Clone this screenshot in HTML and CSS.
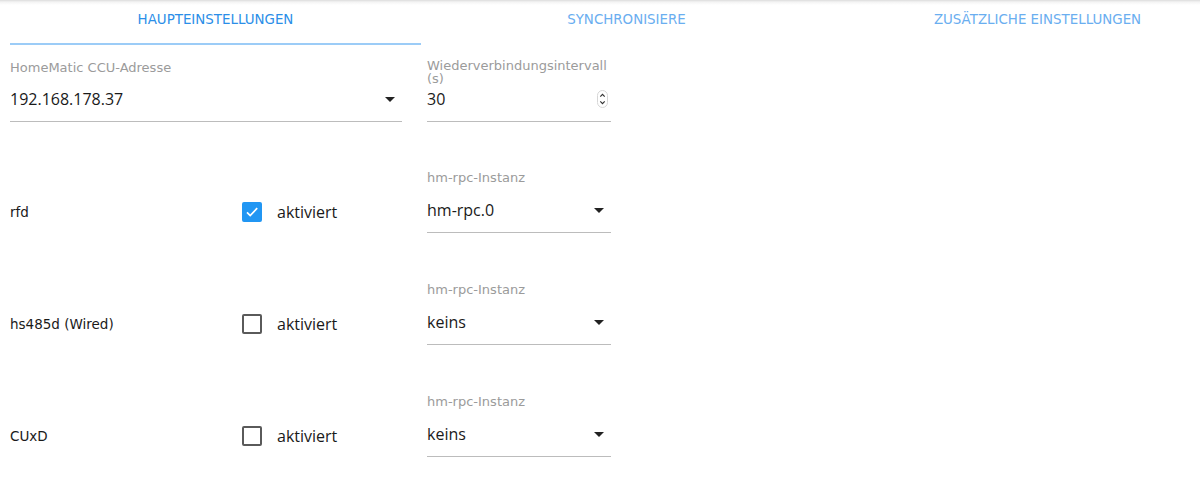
FILE: index.html
```html
<!DOCTYPE html>
<html lang="de">
<head>
    <meta charset="UTF-8">
    <title>HomeMatic RPC Einstellungen</title>
    <link rel="stylesheet" href="styles.css">
</head>
<body>
    <div class="tabs">
        <div class="tab active">Haupteinstellungen</div>
        <div class="tab">Synchronisiere</div>
        <div class="tab">Zusätzliche Einstellungen</div>
    </div>

    <div class="form">
        <div class="top-row">
            <div class="field wide">
                <div class="label">HomeMatic CCU-Adresse</div>
                <div class="value">
                    <span>192.168.178.37</span>
                    <svg class="arrow" viewBox="0 0 24 24"><path d="M7 10l5 5 5-5z"/></svg>
                </div>
            </div>
            <div class="field narrow">
                <div class="label two-lines">Wiederverbindungsintervall (s)</div>
                <div class="value">
                    <span>30</span>
                    <svg class="spinner" viewBox="0 0 11 18">
                        <rect x="0.5" y="0.5" width="10" height="17" rx="5" fill="#fff" stroke="#d6d6d6"/>
                        <path d="M3.3 6.6l2.2-2.2 2.2 2.2M3.3 11.4l2.2 2.2 2.2-2.2" fill="none" stroke="#333" stroke-width="1.2"/>
                    </svg>
                </div>
            </div>
        </div>

        <div class="rows">
            <div class="row">
                <div class="name">rfd</div>
                <label class="check">
                    <span class="box checked">
                        <svg viewBox="0 0 16 16"><path d="M3 8.4l3.2 3.2L13.2 4.2" fill="none" stroke="#fff" stroke-width="1.7"/></svg>
                    </span>
                    aktiviert
                </label>
                <div class="field narrow">
                    <div class="label">hm-rpc-Instanz</div>
                    <div class="value">
                        <span>hm-rpc.0</span>
                        <svg class="arrow" viewBox="0 0 24 24"><path d="M7 10l5 5 5-5z"/></svg>
                    </div>
                </div>
            </div>

            <div class="row">
                <div class="name">hs485d (Wired)</div>
                <label class="check">
                    <span class="box"></span>
                    aktiviert
                </label>
                <div class="field narrow">
                    <div class="label">hm-rpc-Instanz</div>
                    <div class="value">
                        <span>keins</span>
                        <svg class="arrow" viewBox="0 0 24 24"><path d="M7 10l5 5 5-5z"/></svg>
                    </div>
                </div>
            </div>

            <div class="row">
                <div class="name">CUxD</div>
                <label class="check">
                    <span class="box"></span>
                    aktiviert
                </label>
                <div class="field narrow">
                    <div class="label">hm-rpc-Instanz</div>
                    <div class="value">
                        <span>keins</span>
                        <svg class="arrow" viewBox="0 0 24 24"><path d="M7 10l5 5 5-5z"/></svg>
                    </div>
                </div>
            </div>
        </div>
    </div>
</body>
</html>
```

FILE: styles.css
```css
* { margin: 0; padding: 0; box-sizing: border-box; }

body {
    font-family: "DejaVu Sans", sans-serif;
    background: white;
    color: #212121;
    width: 1200px;
    height: 501px;
    overflow: hidden;
}

.tabs {
    display: flex;
    padding-left: 10px;
    background: linear-gradient(#dcdcdc 0, #f4f4f4 2px, #fff 5px);
}

.tab {
    flex: 0 0 411px;
    height: 45px;
    padding-top: 12px;
    line-height: 16px;
    text-align: center;
    text-transform: uppercase;
    font-size: 13.4px;
    color: #6aaef0;
    border-bottom: 2px solid transparent;
}

.tab.active {
    color: #2b8ee8;
    border-bottom-color: #9cccf7;
}

.form {
    padding: 0 10px;
}

.top-row {
    display: flex;
    align-items: flex-end;
    gap: 25px;
    padding-top: 14px;
}

.field.wide { width: 392px; }
.field.narrow { width: 184px; }

.label {
    font-size: 13px;
    line-height: 14px;
    color: #9b9b9b;
    margin-bottom: 15px;
    white-space: nowrap;
}

.label.two-lines {
    line-height: 13px;
    margin-bottom: 4px;
    white-space: normal;
}

.top-row .wide .label { margin-bottom: 14px; }

.value {
    display: flex;
    align-items: center;
    justify-content: space-between;
    height: 33px;
    padding-bottom: 12px;
    border-bottom: 1px solid #bcbcbc;
    font-family: "Open Sans", sans-serif;
    font-size: 16px;
    line-height: 20px;
    color: #1a1a1a;
}

.arrow {
    width: 24px;
    height: 24px;
    fill: #222;
}

.spinner {
    width: 11px;
    height: 18px;
    margin-right: 3px;
}

.rows {
    display: flex;
    flex-direction: column;
    gap: 50px;
    margin-top: 49px;
}

.row {
    display: flex;
    align-items: flex-end;
}

.name {
    flex: 0 0 232px;
    font-size: 13.5px;
    line-height: 20px;
    margin-bottom: 11px;
    color: #1a1a1a;
}

.check {
    flex: 0 0 185px;
    display: flex;
    align-items: center;
    gap: 15px;
    height: 20px;
    margin-bottom: 11px;
    font-family: "Open Sans", sans-serif;
    font-size: 16px;
    color: #1a1a1a;
}

.box {
    width: 20px;
    height: 20px;
    border: 2px solid #5a5a5a;
    border-radius: 2px;
    display: flex;
}

.box.checked {
    background: #2196f3;
    border-color: #2196f3;
}

.box svg {
    width: 16px;
    height: 16px;
}
```
